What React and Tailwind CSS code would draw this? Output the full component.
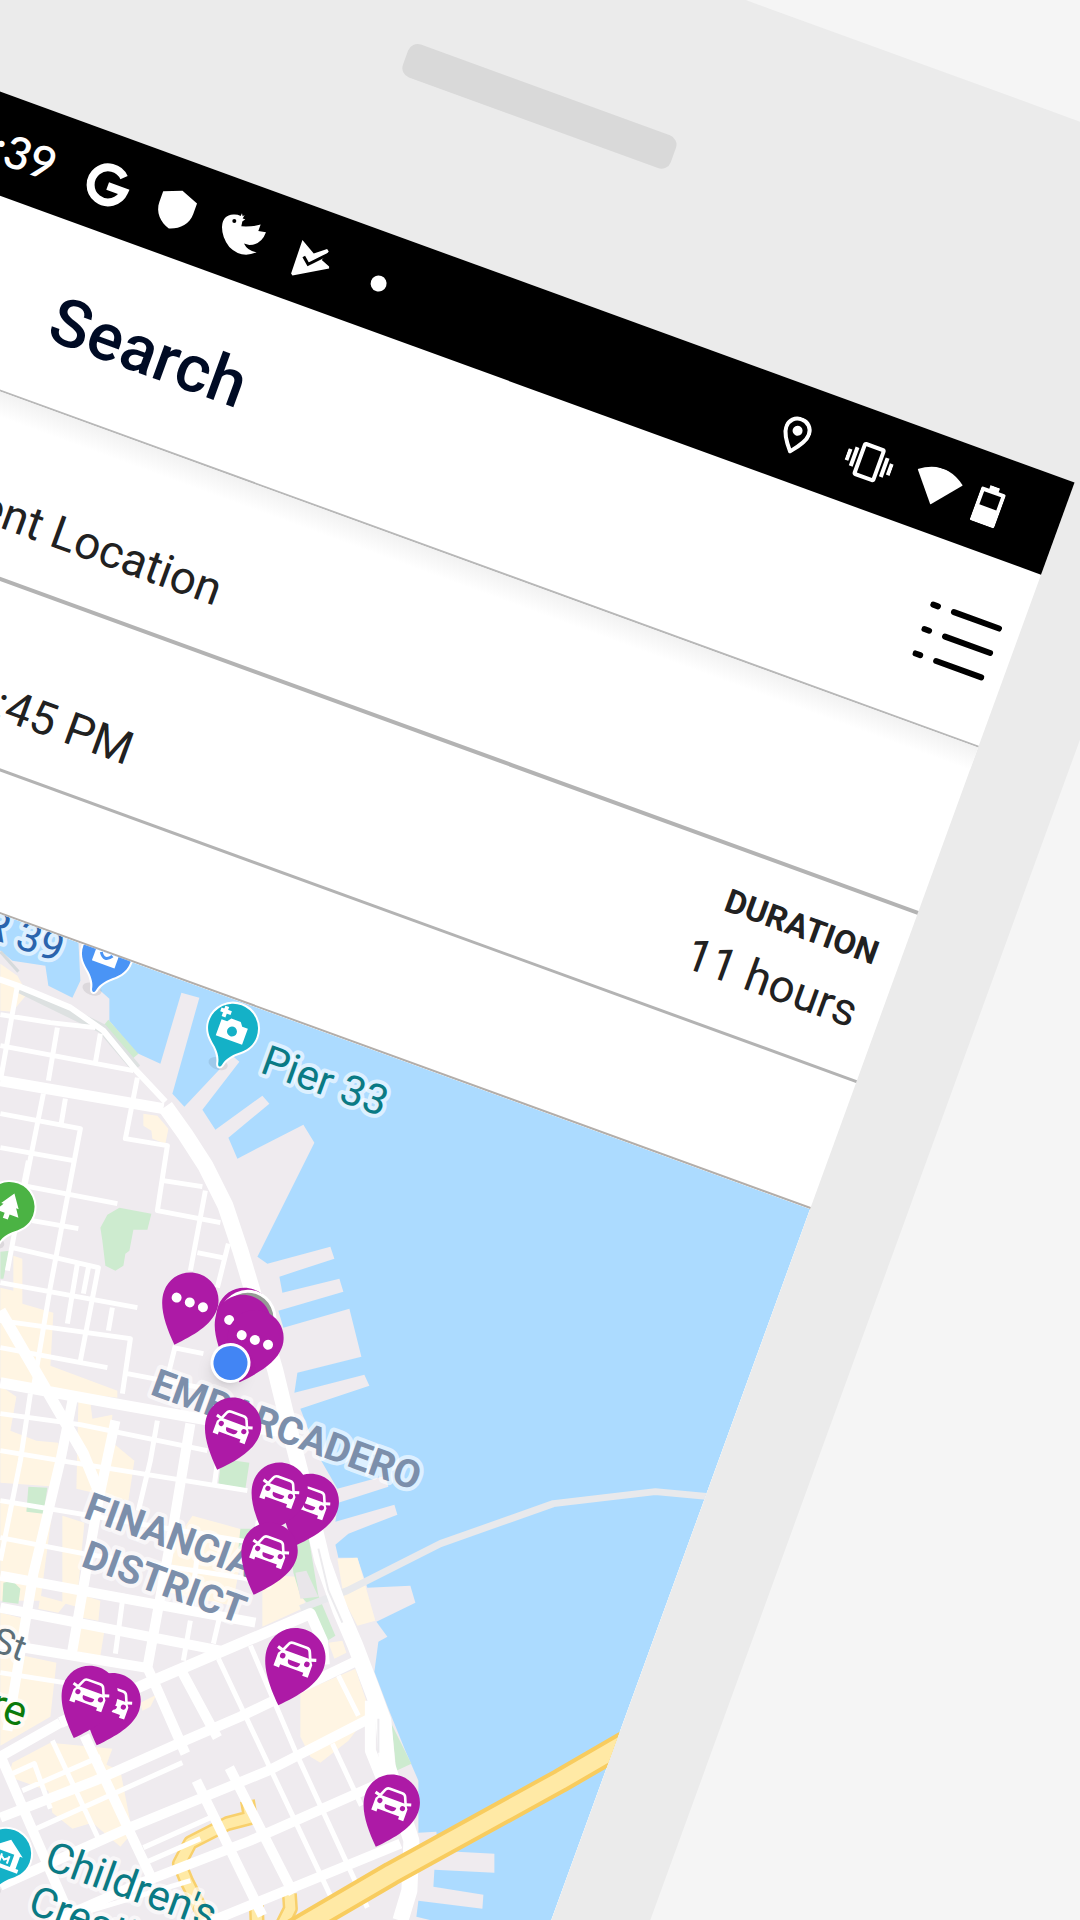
import React from "react";
import { MdPark, MdVibration } from "react-icons/md";

const LAND =
  "M-60 940L0 950L12 960L45 965L48 985L72 997L80 980L76 900L110 900L100 990L109 998L109 1020L136 1052L160 1063L181 992L199 997L172 1093L184 1106L232 1055L239 1061L202 1109L215 1129L262 1095L269 1103L228 1137L237 1158L303 1124L314 1142L257 1256L267 1263L330 1246L334 1258L279 1276L282 1292L339 1278L343 1291L278 1310L283 1327L349 1308L361 1356L297 1372L294 1392L364 1374L369 1385L300 1408L318 1455L337 1488L385 1475L388 1486L338 1502L335 1521L394 1504L397 1514L348 1533L335 1544L338 1557L357 1557L367 1587L410 1585L415 1602L376 1621L387 1636L378 1641L374 1671L388 1708L405 1750L418 1780L418 1832L436 1831L438 1850L494 1853L494 1872L434 1869L433 1886L483 1894L482 1908L418 1900L416 1916L440 1922L440 2000L-60 2000Z";

const SHOPS = [
  "M0 963L17 975L27 993L12 1011L0 1010Z",
  "M143 1113L157 1115L168 1128L165 1143L152 1138L151 1130L143 1125Z",
  "M13 1255L22 1258L22 1303L53 1312L50 1365L117 1390L117 1397L60 1390L0 1378L0 1287L13 1290Z",
  "M0 1385L16 1396L10 1430L36 1440L58 1442L56 1486L0 1482Z",
  "M78 1400L90 1402L92 1418L112 1414L110 1440L134 1460L128 1500L76 1488Z",
  "M0 1498L52 1510L40 1600L0 1600Z",
  "M62 1515L84 1522L76 1606L62 1602Z",
  "M40 1595L66 1602L58 1612L38 1608Z",
  "M84 1595L100 1600L98 1620L76 1616Z",
  "M192 1515L246 1530L232 1605L170 1592L172 1545Z",
  "M262 1574L296 1576L306 1606L262 1626Z",
  "M78 1625L104 1630L100 1655L72 1650Z",
  "M0 1612L24 1618L20 1642L0 1638Z",
  "M0 1650L56 1662L50 1716L0 1745Z",
  "M140 1702L156 1694L150 1706L142 1710Z",
  "M12 1762L50 1742L112 1748L106 1764L120 1770L132 1832L120 1846L92 1822L72 1828L52 1812L48 1790L8 1776Z",
  "M300 1692L355 1668L370 1712L348 1740L320 1762L310 1756L300 1736Z",
  "M337 1558L357 1557L375 1620L357 1625L344 1600Z",
  "M328 1642L342 1640L346 1652L334 1658Z",
];

const PARKS = [
  "M103 1025L108 1019L138 1053L132 1058Z",
  "M100 1227L107 1214L119 1207L151 1213L147 1229L133 1229L129 1250L125 1253L123 1265L115 1270L105 1265L102 1240Z",
  "M0 1251L9 1250L3 1278L0 1278Z",
  "M221 1458L249 1462L245 1488L218 1483Z",
  "M28 1486L47 1487L43 1513L26 1511Z",
  "M3 1582L12 1580L20 1588L18 1603L2 1601Z",
  "M240 1528L252 1528L246 1550L238 1548Z",
  "M290 1545L308 1535L318 1595L335 1635L327 1640L312 1608L300 1595L293 1572Z",
  "M391 1723L411 1763L396 1770Z",
];

const ROADS = [
  {
    w: 5,
    d: "M0 1014L50 1022L95 1027M17 985L0 1080M57 1027L48 1080M43 1093L25 1183M100 1033L95 1062M0 1045L133 1070M137 1077L125 1138L167 1145L157 1210L220 1222M65 1098L61 1122M0 1113L80 1128L50 1286L32 1393M0 1147L73 1160M23 1185L117 1203M163 1180L202 1186M205 1190L190 1270M28 1160L23 1185L7 1270M32 1220L78 1228M12 1247L98 1267L80 1360M0 1282L137 1307M77 1263L67 1323M88 1267L83 1293M112 1307L108 1330M0 1320L130 1338L122 1393M0 1347L107 1367M197 1252L222 1257M228 1243L217 1287M173 1347L203 1353M175 1345L168 1373M127 1373L200 1387M30 1393L20 1460L0 1560M157 1420L150 1460L138 1510M0 1413L80 1424L207 1450M0 1450L60 1460L247 1490M220 1440L214 1484M0 1500L270 1545M0 1537L83 1553L260 1580M123 1593L115 1653M157 1600L147 1660M190 1620L183 1660M220 1613L213 1643M0 1672L70 1683M200 1530L190 1610M218 1658L330 1895M250 1645L296 1753L367 1907M332 1743L361 1805M338 1675L358 1715M36 1828L182 1762M12 1773L34 1763L50 1808M22 1790L100 1756M143 1847L210 1817M145 1862L200 1838M52 1740L98 1838M90 1910L190 1880M258 1520L250 1570",
  },
  {
    w: 10,
    d: "M190 1423L173 1525L147 1667L153 1680M72 1400L60 1460L33 1573L7 1730M115 1420L98 1500L72 1650M0 1575L255 1622M0 1607L220 1650M0 1643L145 1667M153 1680L185 1753M182 1672L217 1737M196 1780L262 1915M229 1767L293 1893M84 1735L150 1875M0 1755L28 1820L65 1905M0 1817L95 1780L180 1742L240 1716L363 1657M0 1885L129 1827L268 1770L371 1717M50 1922L139 1883L250 1840L390 1778M200 1925L400 1843M0 1756L60 1722",
  },
  {
    w: 11,
    d: "M0 1080L163 1108M0 1310L83 1453L98 1490M0 1382L120 1404L250 1427L290 1432M60 1722L153 1680L310 1613L322 1640L324 1664M370 1700L370 1750L390 1800",
  },
  { w: 6, d: "M-20 974L0 979L17 985L70 1007L103 1030L135 1069L165 1101" },
  {
    w: 16,
    d: "M165 1106L185 1134L205 1165L225 1205L240 1250L252 1290L275 1370L292 1440L310 1510L322 1560L340 1610L355 1645L372 1690L383 1720L387 1765L400 1805L411 1840L409 1890L400 1920",
  },
];

const RAMPS =
  "M247 1800L250 1817L227 1823L190 1842L179 1863L186 1880L207 1922M289 1893L290 1908L280 1928M256 1905L257 1930";
const BRIDGE = "M290 1932L391 1873L560 1780L660 1722";

function MapArt() {
  return (
    <svg className="block h-full w-full" viewBox="0 0 1264 1200" preserveAspectRatio="xMinYMin slice" aria-hidden="true">
      <rect width="1264" height="1200" fill="#acdbff" />
      <g transform="rotate(-20) translate(378 -776)" strokeLinejoin="round" fill="none">
        <path d={LAND} fill="#efebef" />
        {SHOPS.map((d) => (
          <path key={d} d={d} fill="#fff5e3" />
        ))}
        {PARKS.map((d) => (
          <path key={d} d={d} fill="#cdebcf" />
        ))}
        <path d="M295 1572L306 1570L318 1596L300 1598Z" fill="#e9e6ea" />
        <path d="M300 1608L347 1590L440 1543L553 1503L655 1491L730 1498" stroke="#e8e9ec" strokeWidth="7" />
        <path d="M0 951L18 971" stroke="#d5dadc" strokeWidth="3" />
        <path d="M20 988L102 1028L136 1068" stroke="#dde1e1" strokeWidth="10" />
        <path d={RAMPS} stroke="#f8d06c" strokeWidth="15" />
        <path d={RAMPS} stroke="#ffeaa6" strokeWidth="10" />
        {ROADS.map((r) => (
          <path key={r.w} d={r.d} stroke="#ffffff" strokeWidth={r.w} />
        ))}
        <path d="M318 1548L328 1590L342 1622M378 1718L378 1752" stroke="#ecebee" strokeWidth="2" />
        <path d={BRIDGE} stroke="#f8cc5f" strokeWidth="25" />
        <path d={BRIDGE} stroke="#ffe9a5" strokeWidth="17" />
      </g>
      <g
        fontFamily="Roboto, sans-serif"
        fontSize="42"
        stroke="#ffffff"
        strokeOpacity="0.6"
        strokeWidth="8"
        strokeLinejoin="round"
        paintOrder="stroke"
      >
        <text x="473" y="26" textAnchor="end" fill="#2a64ad">PIER 39</text>
        <text x="699" y="60" fill="#0a7a84">Pier 33</text>
        <g fontWeight="700" fontSize="39" fill="#7c8fab">
          <text x="706" y="400">EMBARCADERO</text>
          <text x="785" y="539" textAnchor="middle">FINANCIAL</text>
          <text x="785" y="585" textAnchor="middle">DISTRICT</text>
        </g>
        <text x="677" y="695" textAnchor="end" fontSize="36" fill="#5d6f78">St</text>
        <text x="700" y="757" textAnchor="end" fill="#0b7a0b">re</text>
        <text x="768" y="882" fill="#0a7a84">Children's</text>
        <text x="768" y="929" fill="#0a7a84">Creativity</text>
      </g>
    </svg>
  );
}

function Car() {
  return (
    <g transform="translate(8 13)">
      <path d="M6.500 12L9.500 5Q10.500 2.500 13.500 2.500H26.500Q29.500 2.500 30.500 5L33.500 12" fill="none" stroke="#fff" strokeWidth="2.600" />
      <path d="M1 10.500L6 12M39 10.500L34 12" stroke="#fff" strokeWidth="3" />
      <path d="M6 11.500H34L37 16V28.500H31.500V25.500H8.500V28.500H3V16Z" fill="#fff" />
      <circle cx="8" cy="17" r="2.600" fill="#ad1aa6" />
      <circle cx="32" cy="17" r="2.600" fill="#ad1aa6" />
      <path d="M14 18.500H26Q26 23 22 23H18Q14 23 14 18.500Z" fill="#ad1aa6" />
    </g>
  );
}

const PINS = [
  { id: 1, place: "left-[741px] top-[266px] w-14", kind: "plain" },
  { id: 2, place: "left-[685px] top-[270px] w-14", kind: "dots" },
  { id: 3, place: "left-[745px] top-[267px] w-14", kind: "halo" },
  { id: 4, place: "left-[742px] top-[273px] w-14", kind: "dots" },
  { id: 5, place: "left-[759px] top-[283px] w-14", kind: "dots" },
  { id: 6, place: "left-[768px] top-[373px] w-14", kind: "car" },
  { id: 7, place: "left-[867px] top-[418px] w-14", kind: "car" },
  { id: 8, place: "left-[834px] top-[418px] w-14", kind: "car" },
  { id: 9, place: "left-[845px] top-[478px] w-14", kind: "car" },
  { id: 10, place: "left-[904px] top-[568px] w-[60px]", kind: "car" },
  { id: 11, place: "left-[749px] top-[673px] w-14", kind: "car" },
  { id: 12, place: "left-[725px] top-[674px] w-14", kind: "car" },
  { id: 13, place: "left-[1046px] top-[673px] w-14", kind: "car" },
];

function ParkingPin({ place, kind }) {
  return (
    <button type="button" aria-label="Parking spot" className={`absolute ${place}`}>
      <svg viewBox="0 0 56 75" className="block w-full overflow-visible">
        {kind === "halo" ? (
          <circle cx="28" cy="28" r="27" fill="#959b95" stroke="#fff" strokeWidth="3" />
        ) : (
          <path d="M28 0C43.500 0 56 12 56 28C56 44 43 60 28 75C13 60 0 44 0 28C0 12 12.500 0 28 0Z" fill="#ad1aa6" />
        )}
        {kind === "dots" && [14, 28, 42].map((x) => <circle key={x} cx={x} cy="30" r="5" fill="#fff" />)}
        {kind === "car" && <Car />}
      </svg>
    </button>
  );
}

function PoiPin({ place, color, label, children }) {
  return (
    <button type="button" aria-label={label} className={`absolute w-14 ${place}`}>
      <svg viewBox="0 0 56 72" className="block w-full overflow-visible">
        <ellipse cx="26" cy="66" rx="10" ry="6" fill="#000" opacity="0.08" />
        <path
          d="M28 3A25 25 0 0 1 53 28C53 40 45 46 39 51C34 56 31 60 30 66C29 69 27 69 26 66C25 60 22 56 17 51C11 46 3 40 3 28A25 25 0 0 1 28 3Z"
          fill={color}
          stroke="#fff"
          strokeWidth="4"
          paintOrder="stroke"
        />
        {children}
      </svg>
    </button>
  );
}

function StatusBar() {
  return (
    <div className="flex h-[98px] items-center bg-black pl-[134px] pr-[60px] pt-1 text-white">
      <span className="font-['Lato',sans-serif] text-[45px] font-semibold leading-none">:39</span>
      <div className="ml-8 flex items-center gap-6">
        <svg viewBox="-2 -2 48 48" className="size-12" fill="none" stroke="currentColor" strokeWidth="8">
          <path d="M34.500 9.500A17.500 17.500 0 1 0 39.500 23H22" />
        </svg>
        <svg viewBox="-6 -4 48 48" className="size-12" fill="currentColor">
          <path d="M18 0L36 7V18C36 29 28 37 18 40C8 37 0 29 0 18V7Z" />
        </svg>
        <svg viewBox="-72 -72 144 144" className="size-12" fill="currentColor">
          <g transform="rotate(-20)">
            <path d="M-30 -59Q-18 -60 -8 -55L-4 -63L-2 -54L4 -58L-2 -47L6 -45L-3 -38L-6 -24Q26 -22 52 -29L45 -10L68 -6Q54 32 18 32L2 28Q12 50 40 54Q-6 74 -42 38Q-64 10 -64 -22Q-62 -58 -30 -59Z" />
            <circle cx="-27" cy="-40" r="6" fill="#000" />
          </g>
        </svg>
        <svg viewBox="-66 -72 144 144" className="size-12" fill="currentColor">
          <g transform="rotate(-20)">
            <path d="M-20 -55L14 -14L54 -28L59 -20L38 5L60 25L60 31L-50 52L-54 46Z" strokeLinejoin="round" />
            <path d="M-16 -5L-3 18L64 -15" fill="none" stroke="#000" strokeWidth="9" />
          </g>
        </svg>
        <span className="mx-4 size-4 rounded-full bg-white" />
      </div>
      <div className="ml-auto flex items-center">
        <svg viewBox="0 0 28 38" className="mr-10 w-7">
          <path d="M14 2C21 2 26 7 26 14C26 21 20 29 14 36C8 29 2 21 2 14C2 7 7 2 14 2Z" fill="none" stroke="currentColor" strokeWidth="4" />
          <circle cx="14" cy="14" r="5" fill="currentColor" />
        </svg>
        <MdVibration className="mr-6 size-12" />
        <svg viewBox="0 0 48 38" className="mr-[18px] w-12" fill="currentColor">
          <path d="M0 9Q24 -9 48 9L24 38Z" />
        </svg>
        <svg viewBox="0 0 26 40" className="w-[26px]">
          <path d="M8 0H18V4H24Q26 4 26 6V38Q26 40 24 40H2Q0 40 0 38V6Q0 4 2 4H8ZM4 8V22H22V8Z" fill="currentColor" fillRule="evenodd" />
        </svg>
      </div>
    </div>
  );
}

export default function App() {
  return (
    <main className="flex h-screen w-full items-start overflow-hidden bg-[#f5f5f5] font-['Roboto',sans-serif]">
      <div className="-ml-[84px] -mt-[302px] w-[1450px] shrink-0 origin-top-left rotate-20 rounded-[100px] bg-[#ebebeb] px-[93px] pb-[341px]">
        <div className="flex h-[341px] items-center justify-center">
          <div className="h-[35px] w-[285px] rounded-[10px] bg-[#d9d9d9]" />
        </div>

        <div className="bg-white text-[#212121]">
          <StatusBar />

          <header className="flex h-[184px] items-center justify-between border-b-2 border-[#b8b8b8] pl-[247px] pr-[18px]">
            <h1 className="pt-3 text-[66px] font-medium leading-none text-[#000b24]">Search</h1>
            <button type="button" aria-label="Show list">
              <svg viewBox="0 0 76 60" className="w-[76px]" stroke="#000" strokeWidth="6" strokeLinecap="round">
                <path d="M3 4H8M25 4H73M3 30H8M25 30H73M3 56H8M25 56H73" />
              </svg>
            </button>
          </header>

          <section className="h-[178px] border-b-4 border-[#b3b3b3]">
            <div className="h-6 bg-linear-to-b from-[#f2f2f2] to-white" />
            <button type="button" className="mt-[62px] block pl-[158px] text-[46px] leading-[52px]">
              Current Location
            </button>
          </section>

          <section className="flex h-[179px] items-start justify-between border-b-3 border-[#b3b3b3] pl-[326px] pr-6">
            <button type="button" className="pt-[88px] text-[46px] leading-[52px]">:45 PM</button>
            <div className="flex flex-col items-end pt-[31px]">
              <span className="text-[33px] font-bold leading-10">DURATION</span>
              <span className="pt-4 text-[46px] leading-[52px]">11 hours</span>
            </div>
          </section>

          <div className="h-[132px]" />

          <section aria-label="Map" className="relative h-[1200px] overflow-hidden border-t-2 border-[#b3aeaa]">
            <MapArt />
            <PoiPin place="left-[488px] -top-[27px]" color="#4a94f5" label="PIER 39">
              <rect x="16" y="20" width="24" height="19" fill="#fff" />
              <path d="M22 28Q28 37 34 28" fill="none" stroke="#4a94f5" strokeWidth="3" />
            </PoiPin>
            <PoiPin place="left-[632px] top-0" color="#14b1c7" label="Pier 33">
              <path d="M14 23H20L23 19H33L36 23H42V40H14Z" fill="#fff" />
              <circle cx="28" cy="31" r="5" fill="#14b1c7" />
              <path d="M15 9V20M10 14H21" stroke="#fff" strokeWidth="4" />
            </PoiPin>
            <PoiPin place="left-[483px] top-[244px]" color="#4bb344" label="Park">
              <g transform="translate(12 11)">
                <MdPark size={32} color="#fff" />
              </g>
            </PoiPin>
            <PoiPin place="left-[701px] top-[853px]" color="#14b1c7" label="Children's Creativity Museum">
              <path d="M11 26L28 13L45 26H42V39H45V43H11V39H14V26Z" fill="#fff" />
              <path d="M20 26H36V39H20Z" fill="#14b1c7" />
              <path d="M24 29V37M32 29V37M24 31L28 34L32 31" fill="none" stroke="#fff" strokeWidth="2" />
            </PoiPin>
            {PINS.map((p) => (
              <ParkingPin key={p.id} place={p.place} kind={p.kind} />
            ))}
            <span className="absolute left-[752px] top-[323px] size-10 rounded-full border-3 border-white bg-[#4285f4] shadow-lg" />
          </section>
        </div>
      </div>
    </main>
  );
}
